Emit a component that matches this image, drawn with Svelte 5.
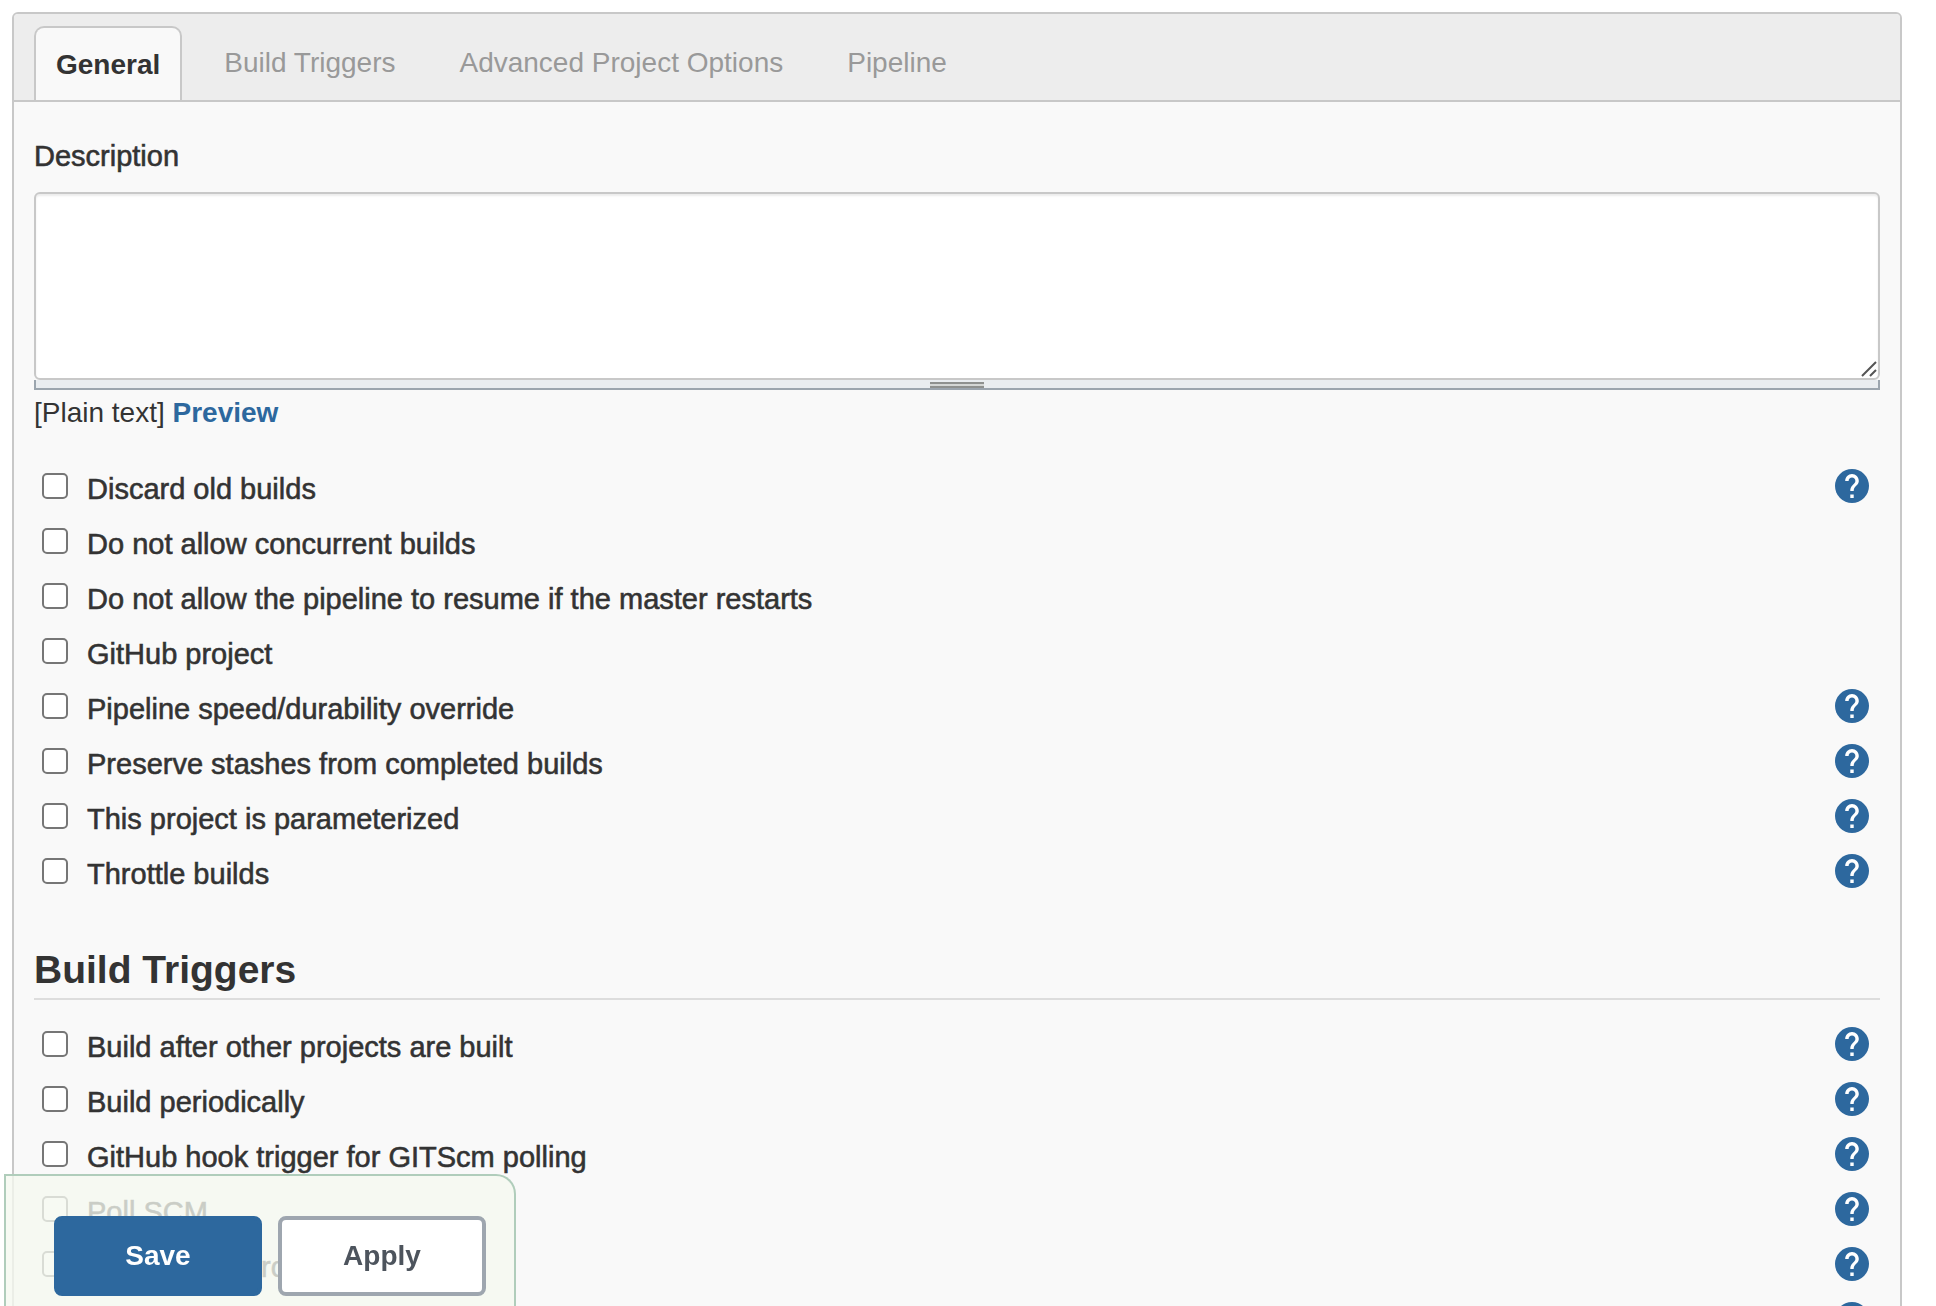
<script lang="ts">
    const tabs = ["General", "Build Triggers", "Advanced Project Options", "Pipeline"];
    let activeTab = "General";
    let description = "";

    let general = [
        { label: "Discard old builds", help: true, checked: false },
        { label: "Do not allow concurrent builds", help: false, checked: false },
        { label: "Do not allow the pipeline to resume if the master restarts", help: false, checked: false },
        { label: "GitHub project", help: false, checked: false },
        { label: "Pipeline speed/durability override", help: true, checked: false },
        { label: "Preserve stashes from completed builds", help: true, checked: false },
        { label: "This project is parameterized", help: true, checked: false },
        { label: "Throttle builds", help: true, checked: false },
    ];
    let triggers = [
        { label: "Build after other projects are built", help: true, checked: false },
        { label: "Build periodically", help: true, checked: false },
        { label: "GitHub hook trigger for GITScm polling", help: true, checked: false },
        { label: "Poll SCM", help: true, checked: false },
        { label: "Disable this project", help: true, checked: false },
        { label: "Quiet period", help: true, checked: false },
    ];
    let groups = [
        { title: "", options: general },
        { title: "Build Triggers", options: triggers },
    ];
</script>

<div class="page">
    <form class="config" on:submit|preventDefault>
        <div class="tab-bar" role="tablist">
            {#each tabs as tab}
                <button
                    type="button"
                    role="tab"
                    class="tab"
                    class:active={tab == activeTab}
                    aria-selected={tab == activeTab}
                    on:click={() => (activeTab = tab)}
                >{tab}</button>
            {/each}
        </div>

        <div class="body">
            <label class="field-label" for="description">Description</label>
            <div class="editor">
                <textarea id="description" bind:value={description}></textarea>
                <svg class="resizer" viewBox="0 0 16 16" aria-hidden="true">
                    <path d="M1 15 15 1M9 15 15 9" />
                </svg>
            </div>
            <div class="handle"><span class="grip"></span></div>
            <p class="markup">[Plain text] <a href="#preview">Preview</a></p>

            {#each groups as group}
                {#if group.title}
                    <h2>{group.title}</h2>
                {/if}
                <div class="options">
                    {#each group.options as option}
                        <div class="option">
                            <label>
                                <input type="checkbox" bind:checked={option.checked} />
                                <span>{option.label}</span>
                            </label>
                            {#if option.help}
                                <button type="button" class="help" aria-label="Help for {option.label}">
                                    <svg viewBox="2 2 20 20">
                                        <circle cx="12" cy="12" r="10" fill="#2d689e" />
                                        <path
                                            fill="#fff"
                                            d="M13 19h-2v-2h2v2zm2.07-7.75l-.9.92C13.45 12.9 13 13.5 13 15h-2v-.5c0-1.1.45-2.1 1.17-2.83l1.24-1.26c.37-.36.59-.86.59-1.41 0-1.1-.9-2-2-2s-2 .9-2 2H8c0-2.21 1.79-4 4-4s4 1.79 4 4c0 .88-.36 1.68-.93 2.25z"
                                        />
                                    </svg>
                                </button>
                            {/if}
                        </div>
                    {/each}
                </div>
            {/each}
        </div>

        <div class="actions">
            <button type="submit" class="action primary">Save</button>
            <button type="button" class="action">Apply</button>
        </div>
    </form>
</div>

<style>
    :global(body) {
        background-color: white;
    }
    .page {
        box-sizing: border-box;
        height: 100vh;
        padding: 12px 34px 0 12px;
        overflow-y: auto;
        scrollbar-width: none;
        color: #333;
        font-family: "Helvetica Neue", "Liberation Sans", Arial, sans-serif;
        font-size: 28px;
        line-height: 32px;
    }
    button {
        font: inherit;
        cursor: pointer;
    }
    .config {
        border: 2px solid #c8c8c8;
        border-radius: 6px 6px 0 0;
        background-color: #f9f9f9;
    }

    /* Tabs */
    .tab-bar {
        display: flex;
        gap: 20px;
        padding: 12px 20px 0;
        border-bottom: 2px solid #c8c8c8;
        border-radius: 4px 4px 0 0;
        background-color: #ededed;
    }
    .tab {
        height: 74px;
        padding: 0 20px 2px;
        border: 2px solid transparent;
        border-bottom: none;
        border-radius: 10px 10px 0 0;
        background: none;
        color: #999;
    }
    .tab.active {
        padding: 2px 20px 0;
        border-color: #c8c8c8;
        background-color: #f9f9f9;
        color: #333;
        font-weight: bold;
    }

    .body {
        padding: 38px 20px 60px;
    }
    .field-label,
    .option label {
        font-size: 29px;
        -webkit-text-stroke: 0.02em currentColor;
    }
    .field-label {
        display: block;
        margin-bottom: 20px;
    }
    .editor {
        position: relative;
    }
    textarea {
        display: block;
        box-sizing: border-box;
        width: 100%;
        height: 188px;
        padding: 8px;
        border: 2px solid #c8c8c8;
        border-radius: 6px;
        outline: none;
        resize: none;
        background-color: white;
        box-shadow: inset 0 2px 2px rgba(0, 0, 0, 0.075);
        color: inherit;
        font: inherit;
    }
    .resizer {
        position: absolute;
        right: 3px;
        bottom: 3px;
        width: 16px;
        height: 16px;
        fill: none;
        stroke: #555;
        stroke-width: 2;
    }
    .handle {
        display: flex;
        justify-content: center;
        height: 8px;
        border: 2px solid #9ba5ae;
        border-top: none;
        background-color: #e9edf0;
    }
    .grip {
        width: 54px;
        height: 2px;
        margin-top: 2px;
        border-top: 2px solid #8e918f;
        border-bottom: 2px solid #8e918f;
        background-color: #d4d7d5;
    }
    .markup {
        margin: 7px 0 29px;
    }
    .markup a {
        color: #2d689e;
        font-weight: bold;
        text-decoration: none;
    }
    h2 {
        margin: 48px 0 16px;
        padding-bottom: 4px;
        border-bottom: 2px solid #ddd;
        font-size: 39px;
        line-height: 48px;
    }

    /* Checkbox rows */
    .option {
        display: flex;
        align-items: center;
        justify-content: space-between;
        height: 55px;
        padding: 0 11px 0 8px;
    }
    .option label {
        display: flex;
        align-items: center;
        gap: 19px;
    }
    .option label span {
        padding-top: 6px;
    }
    input[type="checkbox"] {
        appearance: none;
        box-sizing: border-box;
        width: 26px;
        height: 26px;
        margin: 0;
        border: 2px solid #767676;
        border-radius: 5px;
        background-color: white;
    }
    input[type="checkbox"]:checked {
        background-color: #2d689e;
    }
    .help {
        padding: 0;
        border: none;
        background: none;
    }
    .help svg {
        display: block;
        width: 34px;
        height: 34px;
    }

    /* Save bar stays over the form while it scrolls */
    .actions {
        position: fixed;
        bottom: 0;
        left: 4px;
        display: flex;
        gap: 16px;
        padding: 40px 28px 10px 48px;
        border: 2px solid #b0cdbb;
        border-bottom: none;
        border-radius: 0 20px 0 0;
        background-color: rgba(245, 248, 240, 0.78);
    }
    .action {
        width: 208px;
        height: 80px;
        border: 4px solid #9ea6af;
        border-radius: 8px;
        background-color: white;
        color: #4d545d;
        font-weight: bold;
    }
    .action.primary {
        border-color: #2d689e;
        background-color: #2d689e;
        color: white;
    }
</style>
